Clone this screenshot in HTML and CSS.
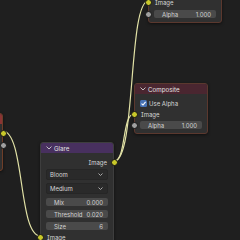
FILE: index.html
```html
<!DOCTYPE html>
<html lang="en">
<head>
    <meta charset="UTF-8">
    <title>Compositor</title>
    <link rel="stylesheet" href="styles.css">
</head>
<body>
    <div class="editor">
        <!-- links -->
        <svg class="links" width="240" height="240" viewBox="0 0 240 240">
            <path d="M2.5 131 C25 131 18 236 40.5 236"/>
            <path d="M114.5 161 C126 161 122 114 134 114"/>
            <path d="M114.5 161 C136 161 128 1 148.5 1"/>
        </svg>

        <!-- render layers, mostly off screen -->
        <div class="node node-left">
            <div class="head head-input"></div>
            <div class="row out"><span class="sock sock-r yellow"></span></div>
            <div class="row out"><span class="sock sock-r grey"></span></div>
        </div>

        <!-- viewer -->
        <div class="node node-output node-viewer">
            <div class="head head-output"></div>
            <div class="row"><span class="sock sock-l yellow"></span><span class="label">Image</span></div>
            <div class="row frow">
                <span class="sock sock-l grey"></span>
                <div class="field"><span>Alpha</span><span>1.000</span></div>
            </div>
        </div>

        <!-- composite -->
        <div class="node node-output node-composite">
            <div class="head head-output">
                <svg class="chev" width="6" height="4" viewBox="0 0 6 4"><path d="M0.5 0.5 L3 3 L5.5 0.5"/></svg>
                <span>Composite</span>
            </div>
            <div class="row crow">
                <span class="check">
                    <svg width="7" height="7" viewBox="0 0 7 7"><path d="M1.5 3.6 L3 5 L5.6 1.8"/></svg>
                </span>
                <span class="label">Use Alpha</span>
            </div>
            <div class="row irow"><span class="sock sock-l yellow"></span><span class="label">Image</span></div>
            <div class="row frow">
                <span class="sock sock-l grey"></span>
                <div class="field"><span>Alpha</span><span>1.000</span></div>
            </div>
        </div>

        <!-- glare -->
        <div class="node node-glare">
            <div class="head head-filter">
                <svg class="chev" width="6" height="4" viewBox="0 0 6 4"><path d="M0.5 0.5 L3 3 L5.5 0.5"/></svg>
                <span>Glare</span>
            </div>
            <div class="row out"><span class="label">Image</span><span class="sock sock-r yellow"></span></div>
            <div class="row drow"><div class="menu"><span>Bloom</span><svg width="5" height="3" viewBox="0 0 5 3"><path d="M0.5 0.5 L2.5 2.5 L4.5 0.5"/></svg></div></div>
            <div class="row drow"><div class="menu"><span>Medium</span><svg width="5" height="3" viewBox="0 0 5 3"><path d="M0.5 0.5 L2.5 2.5 L4.5 0.5"/></svg></div></div>
            <div class="row frow"><div class="field"><span>Mix</span><span>0.000</span></div></div>
            <div class="row frow"><div class="field"><span>Threshold</span><span>0.020</span></div></div>
            <div class="row frow"><div class="field"><span>Size</span><span>6</span></div></div>
            <div class="row irow"><span class="sock sock-l yellow"></span><span class="label">Image</span></div>
        </div>
    </div>
</body>
</html>
```

FILE: styles.css
```css
body{
    margin: 0;
    background: #1f1f1f;
    font-family: Inter, "DejaVu Sans", sans-serif;
    font-feature-settings: "cv08" 1;
    font-size: 6px;
    color: #d6d6d6;
}
.editor{
    position: relative;
    width: 240px;
    height: 240px;
    overflow: hidden;
    background: #1f1f1f;
}
.links{
    position: absolute;
    left: 0;
    top: 0;
}
.links path{
    fill: none;
    stroke: #e2e2a6;
    stroke-width: 1.2;
}

/* nodes */
.node{
    position: absolute;
    width: 74px;
    box-sizing: border-box;
    background: #303030;
    border: 1px solid #3e3e3e;
    border-radius: 3px;
    box-shadow: 0 1px 3px rgba(0,0,0,0.5);
    padding-bottom: 2px;
}
.node-output{
    border-color: #5b382e;
}
.node-left{
    left: -70px;
    top: 113px;
    width: 73px;
    height: 58px;
    border-color: #6e3e28;
}
.node-viewer{
    left: 148px;
    top: -18px;
}
.node-composite{
    left: 134px;
    top: 83px;
}
.node-glare{
    left: 40px;
    top: 142px;
}

.head{
    height: 10px;
    display: flex;
    align-items: center;
    gap: 2px;
    padding-left: 5px;
    border-radius: 2px 2px 0 0;
    color: #e4e4e4;
    font-size: 6.2px;
    margin-bottom: 3px;
}
.head-output{
    background: #4a2630;
}
.head-filter{
    background: #48305f;
}
.head-input{
    background: #8a3434;
}
.chev path{
    fill: none;
    stroke: #d0d0d0;
    stroke-width: 0.9;
}

/* rows */
.row{
    position: relative;
    height: 12px;
    display: flex;
    align-items: center;
    padding: 0 5px;
}
.row .label{
    padding-left: 1px;
}
.out{
    justify-content: flex-end;
}
.out .label{
    padding-right: 1px;
}
.irow{
    height: 11px;
}
.drow{
    margin-bottom: 2px;
}
.node-composite .crow{
    margin-top: 1px;
}
.node-composite .irow{
    height: 10px;
}

/* sockets */
.sock{
    position: absolute;
    top: 50%;
    width: 5px;
    height: 5px;
    margin-top: -3.5px;
    border-radius: 50%;
    border: 1px solid #141414;
}
.sock-l{
    left: -4.5px;
}
.sock-r{
    right: -4.5px;
}
.yellow{
    background: #c8c82a;
}
.grey{
    background: #a0a0a0;
}

/* widgets */
.field{
    flex: 1;
    height: 8px;
    display: flex;
    justify-content: space-between;
    align-items: center;
    padding: 0 5px 0 8px;
    background: #4a4a4a;
    border-radius: 2px;
    color: #d2d2d2;
}
.menu{
    flex: 1;
    height: 9px;
    display: flex;
    justify-content: space-between;
    align-items: center;
    padding: 0 4px 0 3px;
    background: #2a2a2a;
    border: 1px solid #262626;
    border-radius: 2px;
}
.menu path{
    fill: none;
    stroke: #b8b8b8;
    stroke-width: 0.9;
}
.check{
    width: 7px;
    height: 7px;
    margin-right: 1px;
    border-radius: 1.5px;
    background: #4772b3;
    display: flex;
}
.check path{
    fill: none;
    stroke: #ffffff;
    stroke-width: 1.1;
}
```
